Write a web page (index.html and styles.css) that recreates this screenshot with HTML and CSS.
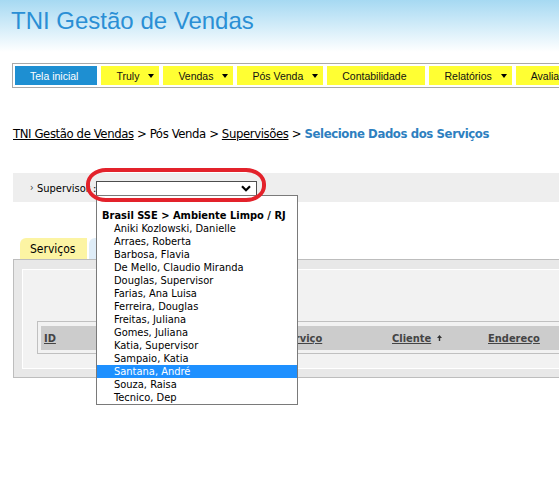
FILE: index.html
```html
<!DOCTYPE html>
<html lang="pt-BR">
<head>
<meta charset="utf-8">
<title>TNI Gestão de Vendas</title>
<link rel="stylesheet" href="styles.css">
</head>
<body>
<header class="top">
  <h1 class="title">TNI Gestão de Vendas</h1>
</header>

<nav class="menu">
  <a class="item home">Tela inicial</a>
  <a class="item drop">Truly<span class="caret"></span></a>
  <a class="item drop">Vendas<span class="caret"></span></a>
  <a class="item drop">Pós Venda<span class="caret"></span></a>
  <a class="item">Contabilidade</a>
  <a class="item drop">Relatórios<span class="caret"></span></a>
  <a class="item drop">Avaliações<span class="caret"></span></a>
</nav>

<div class="crumbs">
  <a class="crumb-link">TNI Gestão de Vendas</a> &gt; Pós Venda &gt; <a class="crumb-link">Supervisões</a> &gt; <strong class="crumb-current">Selecione Dados dos Serviços</strong>
</div>

<div class="filter">
  <span class="bullet">›</span>
  <span class="filter-label">Supervisor :</span>
  <div class="select-wrap">
    <div class="select">
      <svg class="chev" width="10" height="7" viewBox="0 0 10 7"><polyline points="1,1.2 5,5.2 9,1.2" fill="none" stroke="#000" stroke-width="2.2"/></svg>
    </div>
    <ul class="listbox">
      <li class="opt blank">&nbsp;</li>
      <li class="opt group">Brasil SSE &gt; Ambiente Limpo / RJ</li>
      <li class="opt">Aniki Kozlowski, Danielle</li>
      <li class="opt">Arraes, Roberta</li>
      <li class="opt">Barbosa, Flavia</li>
      <li class="opt">De Mello, Claudio Miranda</li>
      <li class="opt">Douglas, Supervisor</li>
      <li class="opt">Farias, Ana Luisa</li>
      <li class="opt">Ferreira, Douglas</li>
      <li class="opt">Freitas, Juliana</li>
      <li class="opt">Gomes, Juliana</li>
      <li class="opt">Katia, Supervisor</li>
      <li class="opt">Sampaio, Katia</li>
      <li class="opt selected">Santana, André</li>
      <li class="opt">Souza, Raisa</li>
      <li class="opt">Tecnico, Dep</li>
    </ul>
    <div class="ring"></div>
  </div>
</div>

<div class="tabs">
  <span class="tab active">Serviços</span>
  <span class="tab other"></span>
</div>

<section class="panel">
  <div class="panel-inner">
    <div class="grid">
      <div class="grid-head">
        <a class="col">ID</a>
        <a class="col">Serviço</a>
        <span class="col"><a class="col-link">Cliente</a><svg class="sort" width="5" height="6" viewBox="0 0 5 6"><path d="M2.5 0 L5 3 L3.2 3 L3.2 6 L1.8 6 L1.8 3 L0 3 Z" fill="#333"/></svg></span>
        <a class="col">Endereço</a>
      </div>
    </div>
  </div>
</section>
</body>
</html>
```

FILE: styles.css
```css
html {
  overflow: hidden;
  height: 100%;
}

body {
  margin: 0;
  min-height: 100%;
  background: #fff;
  color: #000;
  font-family: "DejaVu Sans Condensed", "DejaVu Sans", sans-serif;
  font-stretch: condensed;
  font-size: 11px;
}

.top {
  height: 63px;
  box-sizing: border-box;
  padding: 7px 0 0 11px;
  background: linear-gradient(to bottom, #a6d9f2 0px, #d2ecf9 26px, #ffffff 52px);
}

.title {
  margin: 0;
  font-family: "Liberation Sans", Arial, sans-serif;
  font-stretch: normal;
  font-weight: normal;
  font-size: 24px;
  line-height: 28px;
  color: #2a8fd5;
}

.menu {
  display: flex;
  gap: 4px;
  width: max-content;
  margin-left: 12px;
  padding: 2px;
  border: 1px solid #a9a9a9;
}

.item {
  display: flex;
  align-items: center;
  height: 19px;
  padding: 0 19px 0 15px;
  background: #ffff33;
  color: #111;
  font-family: "Liberation Sans", Arial, sans-serif;
  font-stretch: normal;
  font-size: 10.5px;
  white-space: nowrap;
}

.item.drop {
  padding-right: 5px;
}

.item.home {
  background: #1e8fd2;
  color: #fff;
}

.caret {
  width: 0;
  height: 0;
  margin-left: 9px;
  border-left: 3px solid transparent;
  border-right: 3px solid transparent;
  border-top: 4px solid #000;
}

.crumbs {
  margin: 38px 0 0 13px;
  font-size: 13px;
  line-height: 16px;
  letter-spacing: -0.4px;
  white-space: nowrap;
}

.crumb-link {
  color: #000;
  text-decoration: underline;
}

.crumb-current {
  color: #2e7fc0;
}

.filter {
  display: flex;
  align-items: flex-start;
  height: 29px;
  box-sizing: border-box;
  margin: 31px 0 0 13px;
  padding: 8px 0 0 17px;
  background: #eeeeee;
}

.bullet {
  width: 7px;
  font-size: 10px;
  line-height: 13px;
  color: #333;
}

.filter-label {
  width: 59px;
  line-height: 15px;
  white-space: nowrap;
}

.select-wrap {
  position: relative;
}

.select {
  display: flex;
  align-items: center;
  justify-content: flex-end;
  width: 161px;
  height: 15px;
  box-sizing: border-box;
  padding-right: 5px;
  background: #fff;
  border: 1px solid #4d4d4d;
}

.chev {
  display: block;
}

.listbox {
  position: absolute;
  top: 14px;
  left: 0;
  z-index: 5;
  width: 202px;
  box-sizing: border-box;
  margin: 0;
  padding: 0;
  list-style: none;
  background: #fff;
  border: 1px solid #7a7a7a;
}

.opt {
  height: 13px;
  line-height: 13px;
  padding-left: 17px;
  white-space: nowrap;
}

.opt.group {
  padding-left: 5px;
  font-weight: bold;
}

.opt.selected {
  background: #1e90ff;
  color: #fff;
}

.ring {
  position: absolute;
  left: -10px;
  top: -13px;
  z-index: 6;
  width: 180px;
  height: 34px;
  box-sizing: border-box;
  border: 4px solid #e3222b;
  border-radius: 20px / 16px;
}

.tabs {
  display: flex;
  height: 21px;
  margin: 36px 0 0 20px;
}

.tab {
  box-sizing: border-box;
  height: 21px;
  padding-left: 10px;
  font-size: 12px;
  line-height: 22px;
  border-top-left-radius: 6px;
}

.tab.active {
  width: 67px;
  background: #fcf4a3;
}

.tab.other {
  width: 80px;
  margin-left: 2px;
  background: #dfedf8;
}

.panel {
  margin-left: 13px;
  padding: 9px 0 8px 8px;
  background: #e8e8e8;
  border: 1px solid #bdbdbd;
  border-right: none;
}

.panel-inner {
  padding: 51px 0 14px 14px;
  background: #f2f2f2;
  border: 1px solid #fff;
  border-right: none;
}

.grid {
  padding: 4px 0 3px 3px;
  border: 1px solid #c0c0c0;
  border-right: none;
}

.grid-head {
  display: grid;
  grid-template-columns: 237px 111px 96px 120px;
  align-items: center;
  height: 24px;
  background: #cccccc;
  font-weight: bold;
  font-size: 11px;
}

.col,
.col-link {
  color: #444;
  text-decoration: underline;
}

.col {
  padding-left: 3px;
  white-space: nowrap;
}

span.col {
  text-decoration: none;
}

.sort {
  margin-left: 6px;
  vertical-align: 1px;
}
```
